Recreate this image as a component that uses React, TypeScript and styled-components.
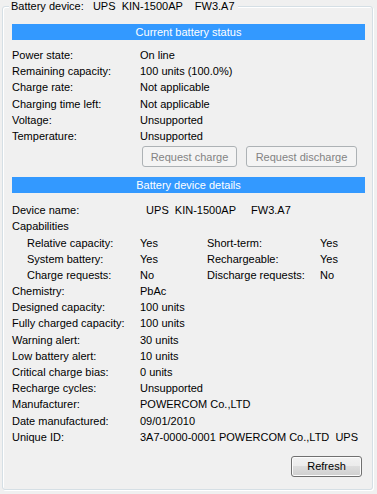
import React from 'react'
import styled, {createGlobalStyle} from 'styled-components'

const GlobalStyle = createGlobalStyle`
  html, body {
    margin: 0;
    padding: 0;
    background: #ffffff;
  }
  body {
    font-family: "Liberation Sans", Arial, sans-serif;
    font-size: 11px;
    color: #000000;
  }
`

const Window = styled.div`
  width: 377px;
  height: 494px;
  background: #f0f0f0;
  padding: 6px 4px 4px 2px;
  box-sizing: border-box;
`

const Frame = styled.div`
  position: relative;
  height: 100%;
  box-sizing: border-box;
  border: 1px solid #d5dfe5;
  border-radius: 3px;
  box-shadow: inset 1px 1px 0 #ffffff, 1px 1px 0 #ffffff;
  padding: 17px 7px 0 9px;
  display: flex;
  flex-direction: column;
`

const Legend = styled.div`
  position: absolute;
  top: -8px;
  left: 6px;
  padding: 0 3px 0 2px;
  background: #f0f0f0;
  line-height: 14px;
  white-space: pre;
`

const SectionBar = styled.div`
  height: 16px;
  line-height: 16px;
  background: #3399ff;
  color: #ffffff;
  text-align: center;
`

const Rows = styled.div<{top: number}>`
  margin-top: ${p => p.top}px;
  display: flex;
  flex-direction: column;
`

const Row = styled.div<{indent?: number}>`
  height: 16.2px;
  line-height: 16.2px;
  display: grid;
  grid-template-columns: ${p => 128 - (p.indent || 0)}px 1fr;
  padding-left: ${p => p.indent || 0}px;
  white-space: pre;
`

const SubRow = styled.div`
  height: 16.2px;
  line-height: 16.2px;
  display: grid;
  grid-template-columns: 113px 67px 113px 1fr;
  padding-left: 15px;
`

const Buttons = styled.div`
  display: flex;
  justify-content: flex-end;
  gap: 9px;
  padding-right: 8px;
  margin: 2px 0 10px;
`

const Button = styled.button<{width: number}>`
  width: ${p => p.width}px;
  height: 21px;
  padding: 0;
  font-family: "Liberation Sans", Arial, sans-serif;
  font-size: 11px;
  border-radius: 3px;
  border: 1px solid #707070;
  color: #000000;
  background: linear-gradient(#f2f2f2 0%, #ebebeb 49%, #dddddd 50%, #cfcfcf 100%);
  box-shadow: inset 0 0 0 1px #fcfcfc;

  &:disabled {
    border-color: #adb2b5;
    color: #838383;
    background: #f4f4f4;
    box-shadow: none;
  }
`

const Footer = styled.div`
  display: flex;
  justify-content: flex-end;
  padding-right: 3px;
  margin-top: 11px;
`

const statusRows: [string, string][] = [
    ['Power state:', 'On line'],
    ['Remaining capacity:', '100 units (100.0%)'],
    ['Charge rate:', 'Not applicable'],
    ['Charging time left:', 'Not applicable'],
    ['Voltage:', 'Unsupported'],
    ['Temperature:', 'Unsupported'],
]

const capabilityRows: [string, string, string, string][] = [
    ['Relative capacity:', 'Yes', 'Short-term:', 'Yes'],
    ['System battery:', 'Yes', 'Rechargeable:', 'Yes'],
    ['Charge requests:', 'No', 'Discharge requests:', 'No'],
]

const detailRows: [string, string][] = [
    ['Chemistry:', 'PbAc'],
    ['Designed capacity:', '100 units'],
    ['Fully charged capacity:', '100 units'],
    ['Warning alert:', '30 units'],
    ['Low battery alert:', '10 units'],
    ['Critical charge bias:', '0 units'],
    ['Recharge cycles:', 'Unsupported'],
    ['Manufacturer:', 'POWERCOM Co.,LTD'],
    ['Date manufactured:', '09/01/2010'],
    ['Unique ID:', '3A7-0000-0001 POWERCOM Co.,LTD  UPS'],
]

const App: React.FC = () => {
    return (
        <>
            <GlobalStyle/>
            <Window>
                <Frame>
                    <Legend>{'Battery device:   UPS  KIN-1500AP    FW3.A7'}</Legend>
                    <SectionBar>Current battery status</SectionBar>
                    <Rows top={7}>
                        {statusRows.map(([label, value]) => (
                            <Row key={label}><span>{label}</span><span>{value}</span></Row>
                        ))}
                    </Rows>
                    <Buttons>
                        <Button width={95} disabled>Request charge</Button>
                        <Button width={111} disabled>Request discharge</Button>
                    </Buttons>
                    <SectionBar>Battery device details</SectionBar>
                    <Rows top={9}>
                        <Row><span>Device name:</span><span>{'  UPS  KIN-1500AP     FW3.A7'}</span></Row>
                        <Row><span>Capabilities</span><span/></Row>
                        {capabilityRows.map(([l1, v1, l2, v2]) => (
                            <SubRow key={l1}>
                                <span>{l1}</span><span>{v1}</span>
                                <span>{l2}</span><span>{v2}</span>
                            </SubRow>
                        ))}
                        {detailRows.map(([label, value]) => (
                            <Row key={label}><span>{label}</span><span>{value}</span></Row>
                        ))}
                    </Rows>
                    <Footer>
                        <Button width={71}>Refresh</Button>
                    </Footer>
                </Frame>
            </Window>
        </>
    )
}

export default App
